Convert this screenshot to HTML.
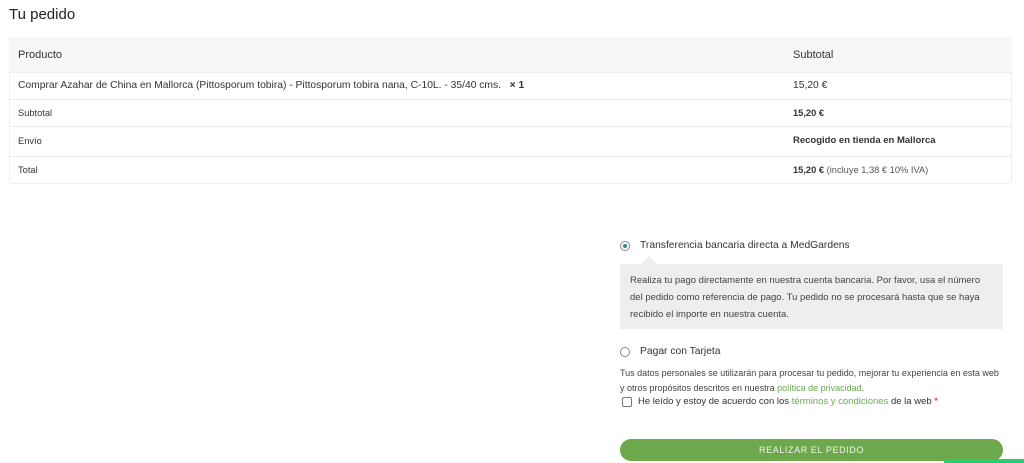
<!DOCTYPE html>
<html><head><meta charset="utf-8"><style>
body{margin:0;width:1024px;height:463px;background:#fff;font-family:"Liberation Sans",sans-serif;color:#333;position:relative;overflow:hidden}
.a{position:absolute;white-space:nowrap}
.row{position:absolute;left:9px;width:1003px;border-top:1px solid #ececec}
.c1{position:absolute;left:9px}
.c2{position:absolute;left:784px}
</style></head><body>
<div class="a" style="left:9px;top:6px;font-size:15px;color:#222">Tu pedido</div>
<div style="position:absolute;left:9px;top:37px;width:1001px;height:145px;border:1px solid #eee;border-radius:3px"></div>
<div class="row" style="top:37px;height:35px;background:#f7f7f7;border-top:none;font-size:11px;color:#333"><span class="c1" style="top:12px">Producto</span><span class="c2" style="top:12px">Subtotal</span></div>
<div class="row" style="top:72px;height:27px;font-size:10.3px"><span class="c1" style="top:7px">Comprar Azahar de China en Mallorca (Pittosporum tobira) - Pittosporum tobira nana, C-10L. - 35/40 cms. &nbsp;&nbsp;<b>× 1</b></span><span class="c2" style="top:7px">15,20 €</span></div>
<div class="row" style="top:99px;height:27px;font-size:9.3px"><span class="c1" style="top:8px">Subtotal</span><span class="c2" style="top:8px;font-weight:bold">15,20 €</span></div>
<div class="row" style="top:126px;height:30px;font-size:9.3px"><span class="c1" style="top:9px">Envío</span><span class="c2" style="top:8px;font-weight:bold;font-size:9.5px">Recogido en tienda en Mallorca</span></div>
<div class="row" style="top:156px;height:27px;font-size:9.3px"><span class="c1" style="top:8px">Total</span><span class="c2" style="top:8px"><b>15,20 €</b> <span style="color:#555">(incluye 1,38 € 10% IVA)</span></span></div>

<div class="a" style="left:620px;top:241px;width:8px;height:8px;border-radius:50%;border:1px solid #888;background:#fff"><div style="margin:2px;width:4px;height:4px;border-radius:50%;background:#2a8a8a"></div></div>
<div class="a" style="left:640px;top:240px;font-size:10.3px;color:#333">Transferencia bancaria directa a MedGardens</div>
<div class="a" style="left:641px;top:256px;width:0;height:0;border-left:8px solid transparent;border-right:8px solid transparent;border-bottom:8px solid #eee"></div>
<div class="a" style="left:620px;top:264px;width:383px;height:65px;background:#eee"></div>
<div class="a" style="left:630px;top:272px;font-size:9.5px;line-height:17px;color:#444">Realiza tu pago directamente en nuestra cuenta bancaria. Por favor, usa el número<br>del pedido como referencia de pago. Tu pedido no se procesará hasta que se haya<br>recibido el importe en nuestra cuenta.</div>
<div class="a" style="left:620px;top:347px;width:8px;height:8px;border-radius:50%;border:1px solid #888"></div>
<div class="a" style="left:640px;top:346px;font-size:10.3px;color:#333">Pagar con Tarjeta</div>
<div class="a" style="left:620px;top:366px;font-size:9px;line-height:15px;color:#444">Tus datos personales se utilizarán para procesar tu pedido, mejorar tu experiencia en esta web<br>y otros propósitos descritos en nuestra <span style="color:#6aa84f">política de privacidad</span>.</div>
<div class="a" style="left:622px;top:397px;width:8px;height:8px;border:1px solid #777;border-radius:2px"></div>
<div class="a" style="left:638px;top:396px;font-size:9.5px;color:#333">He leído y estoy de acuerdo con los <span style="color:#6aa84f">términos y condiciones</span> de la web <span style="color:#c00">*</span></div>
<div class="a" style="left:620px;top:439px;width:383px;height:22px;border-radius:11px;background:#6ea84c;color:#eef5e8;font-size:9px;letter-spacing:.6px;text-align:center;line-height:22px">REALIZAR EL PEDIDO</div>
<div class="a" style="left:944px;top:459px;width:80px;height:4px;background:#2ecc71;border-radius:3px 0 0 0"></div>
</body></html>
